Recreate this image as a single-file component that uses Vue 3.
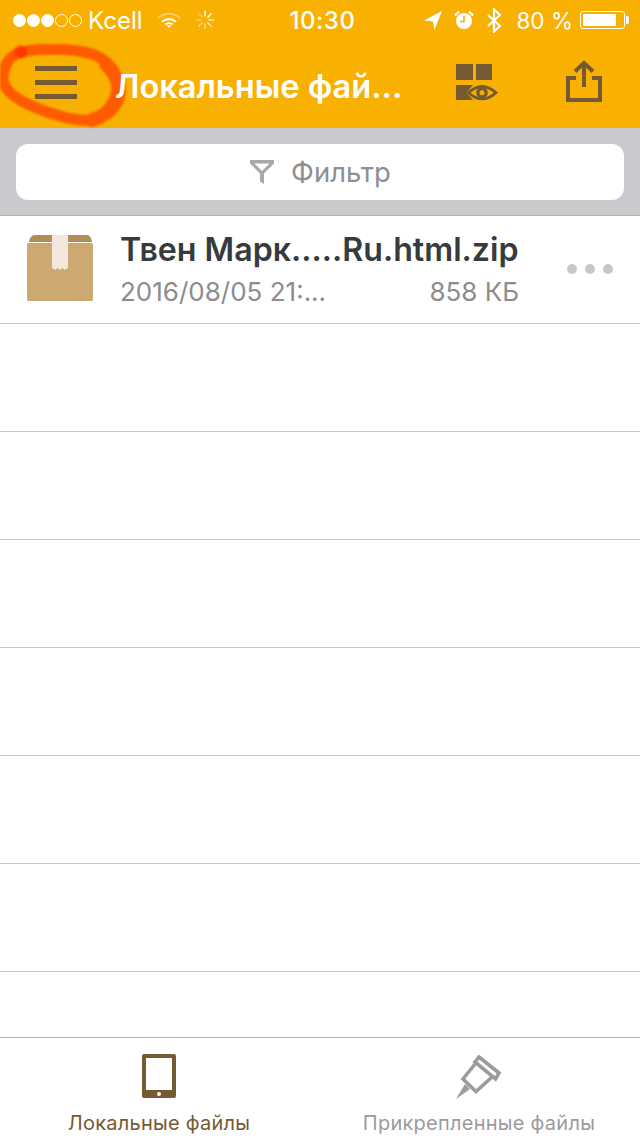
<script setup>
const emptyRows = [1, 2, 3, 4, 5, 6]
</script>

<template>
  <div class="screen">
    <header class="head">
      <div class="status">
        <div class="status-left">
          <span class="dot on"></span><span class="dot on"></span><span class="dot on"></span><span class="dot"></span><span class="dot"></span>
          <span class="carrier">Kcell</span>
          <svg class="wifi" width="24" height="18" viewBox="0 0 26 20">
            <path d="M1 8 A17 17 0 0 1 25 8" fill="none" stroke="#fff" stroke-opacity=".4" stroke-width="2.4"/>
            <path d="M5.5 12 A11 11 0 0 1 20.5 12" fill="none" stroke="#fff" stroke-width="2.4"/>
            <path d="M9 15 A6 6 0 0 1 17 15" fill="none" stroke="#fff" stroke-width="2.2"/>
            <path d="M10.6 16.4 L13 19 L15.4 16.4 A4 4 0 0 0 10.6 16.4Z" fill="#fff"/>
          </svg>
          <svg class="spinner" width="20" height="20" viewBox="0 0 22 22" stroke="#fff" stroke-width="1.8" stroke-linecap="round">
            <path d="M11 1.5V6.5" opacity=".95"/><path d="M17.7 4.3L14.2 7.8" opacity=".85"/><path d="M20.5 11H15.5" opacity=".7"/><path d="M17.7 17.7L14.2 14.2" opacity=".6"/>
            <path d="M11 20.5V15.5" opacity=".5"/><path d="M4.3 17.7L7.8 14.2" opacity=".4"/><path d="M1.5 11H6.5" opacity=".35"/><path d="M4.3 4.3L7.8 7.8" opacity=".3"/>
          </svg>
        </div>
        <div class="clock">10:30</div>
        <div class="status-right">
          <svg class="st-arrow" width="18" height="19" viewBox="0 0 18 19"><path d="M0 9.5 L18 0 L10.5 19 L9 10.5Z" fill="#fff"/></svg>
          <svg class="st-alarm" width="20" height="20" viewBox="0 0 20 20">
            <circle cx="10" cy="11" r="8" fill="#fff"/>
            <path d="M10 6V11.5H6" fill="none" stroke="#f8b100" stroke-width="1.6"/>
            <path d="M1 5.5L5 1.5M19 5.5L15 1.5" stroke="#fff" stroke-width="2.2"/>
          </svg>
          <svg class="st-bt" width="16" height="25" viewBox="0 0 16 24"><path d="M2 6.5 L14 17.5 L8 23 V1 L14 6.5 L2 17.5" fill="none" stroke="#fff" stroke-width="2.2"/></svg>
          <span class="pct">80 %</span>
          <div class="battery"><div class="battery-fill"></div></div>
          <div class="battery-cap"></div>
        </div>
      </div>
      <div class="nav">
        <button class="menu" aria-label="Меню"><span></span><span></span><span></span></button>
        <div class="title">Локальные фай...</div>
        <svg class="view-icon" width="42" height="38" viewBox="0 0 42 38">
          <rect x="0" y="0" width="17" height="16" fill="#755a33"/>
          <rect x="20" y="0" width="16" height="16" fill="#755a33"/>
          <path d="M0 21H17L10.500 28.700L17 36H0Z" fill="#755a33"/>
          <path d="M12.500 28.700 Q26 16.300 40 28.700 Q26 41.100 12.500 28.700Z" fill="#f8b100" stroke="#755a33" stroke-width="2.800"/>
          <circle cx="26" cy="28.700" r="5.800" fill="#755a33"/>
          <circle cx="26" cy="28.700" r="2.500" fill="#f8b100"/>
        </svg>
        <svg class="share-icon" width="36" height="42" viewBox="0 0 36 42" fill="none" stroke="#755a33" stroke-width="4">
          <path d="M10 18H2V40H34V18H26"/>
          <path d="M18 27V3"/>
          <path d="M9 11.5L18 3L27 11.5"/>
        </svg>
      </div>
      <svg class="scribble" width="130" height="90" viewBox="0 0 130 90">
        <path d="M20 8 C40 4 72 4 92 10 C108 15 116 28 117 42 C117 56 108 70 92 76 C76 78 50 70 32 62 C16 55 2 46 3 33 C4 20 10 12 20 8Z" fill="none" stroke="#fe5a00" stroke-width="11" stroke-linecap="round"/>
        <path d="M106 20 C118 32 122 46 116 58 C110 68 100 74 92 76" fill="none" stroke="#fe5a00" stroke-width="14" stroke-linecap="round"/>
        <circle cx="21" cy="8" r="6.500" fill="#fb3a00"/>
      </svg>
    </header>

    <div class="search">
      <div class="field">
        <svg width="26" height="26" viewBox="0 0 26 26"><path d="M1 1H25V4.5L15 14.5V25L11 22.5V14.5L1 4.5ZM5.5 4.5L13 12L20.5 4.5Z" fill="#a8a8ac" fill-rule="evenodd"/></svg>
        <span>Фильтр</span>
      </div>
    </div>

    <main class="list">
      <div class="row file">
        <svg class="box" width="66" height="66" viewBox="0 0 66 66">
          <path d="M2 7 Q3 0 8 0H60 Q64 0 65 7Z" fill="#b28d54"/>
          <rect x="0" y="8" width="66" height="58" rx="1.5" fill="#cda871"/>
          <path d="M25 0H41V33L38 35L35.500 33L33 35L30.500 33L28 35L25 33Z" fill="#f2e7da"/>
        </svg>
        <div class="info">
          <div class="name">Твен Марк.....Ru.html.zip</div>
          <div class="meta"><span>2016/08/05 21:...</span><span>858 КБ</span></div>
        </div>
        <div class="more"><i></i><i></i><i></i></div>
      </div>
      <div v-for="r in emptyRows" :key="r" class="row"></div>
    </main>

    <footer class="tabs">
      <div class="tab active">
        <svg width="36" height="46" viewBox="0 0 36 46">
          <path fill-rule="evenodd" d="M3 1H33Q35 1 35 3V43Q35 45 33 45H3Q1 45 1 43V3Q1 1 3 1ZM5 5V37H31V5Z" fill="#755a33"/>
          <circle cx="18" cy="41" r="2" fill="#fff"/>
        </svg>
        <span>Локальные файлы</span>
      </div>
      <div class="tab">
        <svg width="46" height="46" viewBox="0 0 46 46" fill="none" stroke="#9b9b9b" stroke-width="3.6">
          <path d="M23 4L43 20L39.500 26L19 9Z"/>
          <path d="M19 11L7 26L20 38.500L36 24"/>
          <path d="M9 31L0 46L14 36" fill="#9b9b9b" stroke="none"/>
        </svg>
        <span>Прикрепленные файлы</span>
      </div>
    </footer>
  </div>
</template>

<style scoped>
.screen {
  position: relative;
  width: 640px;
  height: 1136px;
  display: flex;
  flex-direction: column;
  overflow: hidden;
  background: #fff;
  font-family: Inter, "Noto Sans", sans-serif;
}
.head {
  position: relative;
  height: 128px;
  flex: none;
  background: #f8b100;
  color: #fff;
  box-sizing: border-box;
}
.status {
  height: 40px;
  display: grid;
  grid-template-columns: 1fr auto 1fr;
  align-items: center;
  padding: 0 11px 0 13px;
}
.status-left { display: flex; align-items: center; }
.dot {
  width: 13px;
  height: 13px;
  box-sizing: border-box;
  border: 1.5px solid #fff;
  border-radius: 50%;
  margin-right: 1px;
}
.dot.on { background: #fff; }
.carrier { font-size: 24px; margin-left: 5px; font-weight: 400; }
.wifi { margin-left: 14px; }
.spinner { margin-left: 14px; }
.clock { font-size: 24px; font-weight: 500; letter-spacing: .5px; margin-left: 3px; }
.status-right { display: flex; align-items: center; justify-content: flex-end; }
.st-alarm { margin-left: 12px; }
.st-bt { margin-left: 12px; }
.pct { font-size: 22.5px; margin-left: 14px; }
.battery {
  width: 39px;
  height: 12px;
  margin-left: 7px;
  margin-right: 1px;
  border: 1px solid #fff;
  border-radius: 3px;
  padding: 2px;
  box-sizing: content-box;
}
.battery-fill { width: 33px; height: 100%; background: #fff; border-radius: 1px; }
.battery-cap { width: 3px; height: 8px; background: #fff; border-radius: 0 2px 2px 0; }
.nav {
  height: 88px;
  display: flex;
  align-items: center;
  padding-bottom: 4px;
  box-sizing: border-box;
}
.menu {
  flex: none;
  width: 42px;
  height: 33px;
  margin-left: 35px;
  padding: 0;
  background: none;
  border: 0;
  display: flex;
  flex-direction: column;
  justify-content: space-between;
}
.menu span { display: block; height: 5px; background: #755a33; }
.title {
  flex: none;
  position: relative;
  z-index: 1;
  margin-left: 38px;
  margin-top: 8px;
  width: 341px;
  font-size: 32.6px;
  font-weight: 600;
  white-space: nowrap;
}
.view-icon { flex: none; margin-top: 2px; }
.share-icon { flex: none; margin-left: 68px; margin-top: -2px; }
.scribble { position: absolute; left: 0; top: 44px; filter: blur(1px); }
.search {
  flex: none;
  height: 88px;
  padding: 16px 16px 15px;
  box-sizing: border-box;
  background: #c9c9ce;
  border-bottom: 1px solid #b2b2b2;
}
.field {
  height: 56px;
  background: #fff;
  border-radius: 12px;
  display: flex;
  align-items: center;
  justify-content: center;
  gap: 16px;
  color: #8e8e93;
  font-size: 27.5px;
}
.list { flex: 1; overflow: hidden; }
.row {
  height: 108px;
  box-sizing: border-box;
  border-bottom: 1px solid #c8c7cc;
  display: flex;
  align-items: center;
}
.file { padding-left: 27px; }
.box { flex: none; margin-top: -4px; }
.info { width: 399px; margin-left: 27px; margin-top: 2px; }
.name { font-size: 32.15px; font-weight: 600; color: #373b3d; white-space: nowrap; line-height: 36px; margin-top: -2px; }
.meta {
  display: flex;
  justify-content: space-between;
  font-size: 26px;
  line-height: 30px;
  margin-top: 9px;
  color: #8c8c8c;
}
.more { display: flex; gap: 8px; margin-left: 48px; margin-top: -2px; }
.more i { width: 10px; height: 10px; border-radius: 50%; background: #c7c7cc; }
.tabs {
  flex: none;
  height: 99px;
  box-sizing: border-box;
  border-top: 1px solid #b2b2b2;
  display: grid;
  grid-template-columns: 318px 1fr;
  background: #fff;
}
.tab {
  display: flex;
  flex-direction: column;
  align-items: center;
  justify-content: flex-start;
  padding-top: 15px;
  color: #9b9b9b;
  font-size: 20px;
}
.tab span { margin-top: 12px; letter-spacing: .25px; white-space: nowrap; }
.tab.active { color: #755a33; }
</style>
